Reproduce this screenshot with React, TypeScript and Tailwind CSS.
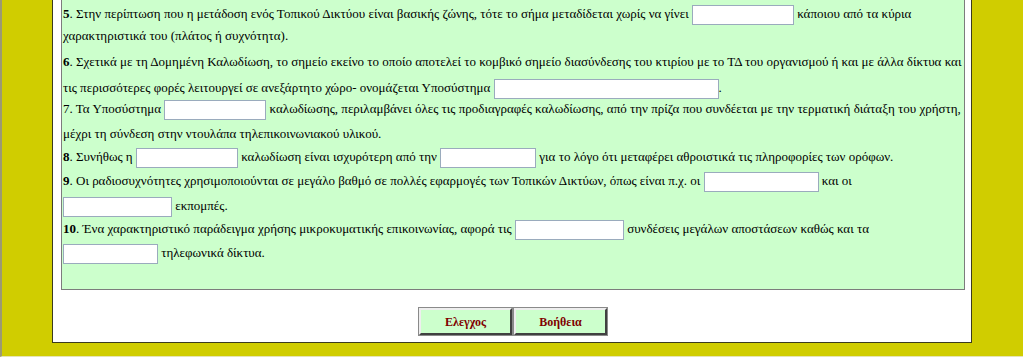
const Blank = ({ w }: { w: number }) => (
  <input
    type="text"
    style={{ width: w }}
    className="inline-block h-[20px] align-middle border border-[#9aabbd] bg-white"
  />
);

export default function App() {
  return (
    <div className="w-[1023px] h-[357px] overflow-hidden bg-[#d0cd00] border-l-2 border-l-[#9c9a72] border-b border-b-[#e6e4b4] font-['Liberation_Serif',serif] text-[13px] text-black">
      <div className="ml-[50px] w-[920px] h-[343px] bg-white border-x border-b border-[#3b3b1e] pl-[8px] pr-[6px]">
        <div className="h-[290px] bg-[#ccffcc] border-x border-b border-[#7c7c7c] pt-[3px] pl-px whitespace-nowrap">
          <div className="h-[22px] leading-[22px]">
            <b>5</b>. Στην περίπτωση που η μετάδοση ενός Τοπικού Δικτύου είναι βασικής ζώνης, τότε το σήμα μεταδίδεται χωρίς να γίνει <Blank w={102} /> κάποιου από τα κύρια
          </div>
          <div className="h-[22px] leading-[22px]">χαρακτηριστικά του (πλάτος ή συχνότητα).</div>
          <div className="h-[22px] leading-[22px] mt-[4px]">
            <b>6</b>. Σχετικά με τη Δομημένη Καλωδίωση, το σημείο εκείνο το οποίο αποτελεί το κομβικό σημείο διασύνδεσης του κτιρίου με το ΤΔ του οργανισμού ή και με άλλα δίκτυα και
          </div>
          <div className="h-[22px] leading-[22px] mt-[4px]">
            τις περισσότερες φορές λειτουργεί σε ανεξάρτητο χώρο- ονομάζεται Υποσύστημα <Blank w={225} />.
          </div>
          <div className="h-[20px] leading-[20px]">
            7. Τα Υποσύστημα <Blank w={102} /> καλωδίωσης, περιλαμβάνει όλες τις προδιαγραφές καλωδίωσης, από την πρίζα που συνδέεται με την τερματική διάταξη του χρήστη,
          </div>
          <div className="h-[22px] leading-[22px] mt-[4px]">μέχρι τη σύνδεση στην ντουλάπα τηλεπικοινωνιακού υλικού.</div>
          <div className="h-[22px] leading-[22px] mt-px">
            <b>8</b>. Συνήθως η <Blank w={102} /> καλωδίωση είναι ισχυρότερη από την <Blank w={96} /> για το λόγο ότι μεταφέρει αθροιστικά τις πληροφορίες των ορόφων.
          </div>
          <div className="h-[22px] leading-[22px] mt-[2px]">
            <b>9</b>. Οι ραδιοσυχνότητες χρησιμοποιούνται σε μεγάλο βαθμό σε πολλές εφαρμογές των Τοπικών Δικτύων, όπως είναι π.χ. οι <Blank w={115} /> και οι
          </div>
          <div className="h-[22px] leading-[22px] mt-[3px]">
            <Blank w={109} /> εκπομπές.
          </div>
          <div className="h-[22px] leading-[22px] mt-px">
            <b>10</b>. Ένα χαρακτηριστικό παράδειγμα χρήσης μικροκυματικής επικοινωνίας, αφορά τις <Blank w={109} /> συνδέσεις μεγάλων αποστάσεων καθώς και τα
          </div>
          <div className="h-[22px] leading-[22px] mt-[2px]">
            <Blank w={95} /> τηλεφωνικά δίκτυα.
          </div>
        </div>

        <div className="mt-[18px] flex justify-center gap-[2px]">
          <button className="w-[93px] h-[27px] bg-[#ccffcc] border-2 border-t-[#eeeeee] border-l-[#eeeeee] border-r-[#404040] border-b-[#404040] outline outline-1 outline-[#8a8a8a] font-bold text-[12px] text-[#800000]">
            Ελεγχος
          </button>
          <button className="w-[93px] h-[27px] bg-[#ccffcc] border-2 border-t-[#eeeeee] border-l-[#eeeeee] border-r-[#404040] border-b-[#404040] outline outline-1 outline-[#8a8a8a] font-bold text-[12px] text-[#800000]">
            Βοήθεια
          </button>
        </div>
      </div>
    </div>
  );
}
